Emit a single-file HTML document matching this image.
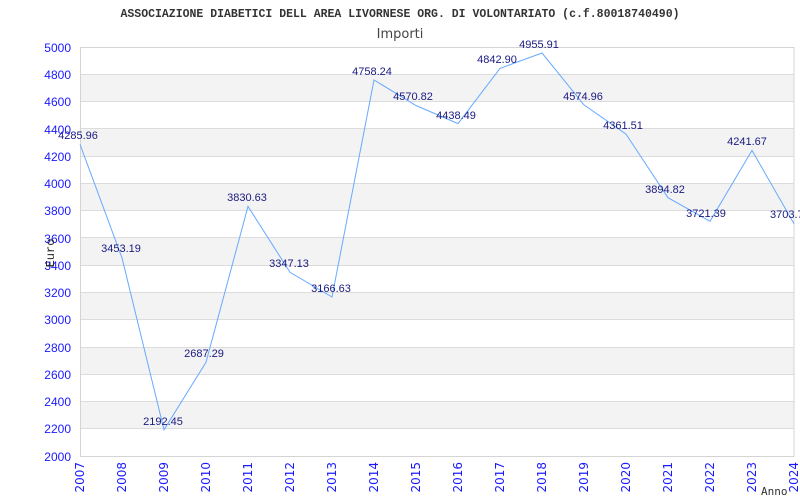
<!DOCTYPE html>
<html><head><meta charset="utf-8"><style>html,body{margin:0;padding:0;background:#fff;width:800px;height:500px;overflow:hidden}</style></head>
<body>
<svg width="800" height="500" xmlns="http://www.w3.org/2000/svg" font-family="Liberation Sans, sans-serif">
<rect width="800" height="500" fill="#fff"/>
<g fill="#f3f3f3">
<rect x="80" y="74.3" width="714" height="27.3"/>
<rect x="80" y="128.8" width="714" height="27.3"/>
<rect x="80" y="183.3" width="714" height="27.3"/>
<rect x="80" y="237.9" width="714" height="27.3"/>
<rect x="80" y="292.4" width="714" height="27.3"/>
<rect x="80" y="347" width="714" height="27.3"/>
<rect x="80" y="401.5" width="714" height="27.3"/>
</g>
<g stroke="#dcdcdc" stroke-width="1">
<line x1="80" y1="74.5" x2="794" y2="74.5"/><line x1="80" y1="101.5" x2="794" y2="101.5"/>
<line x1="80" y1="128.5" x2="794" y2="128.5"/><line x1="80" y1="156.5" x2="794" y2="156.5"/>
<line x1="80" y1="183.5" x2="794" y2="183.5"/><line x1="80" y1="210.5" x2="794" y2="210.5"/>
<line x1="80" y1="237.5" x2="794" y2="237.5"/><line x1="80" y1="265.5" x2="794" y2="265.5"/>
<line x1="80" y1="292.5" x2="794" y2="292.5"/><line x1="80" y1="319.5" x2="794" y2="319.5"/>
<line x1="80" y1="347.5" x2="794" y2="347.5"/><line x1="80" y1="374.5" x2="794" y2="374.5"/>
<line x1="80" y1="401.5" x2="794" y2="401.5"/><line x1="80" y1="428.5" x2="794" y2="428.5"/>
</g>
<rect x="80.5" y="47.5" width="713.5" height="409" fill="none" stroke="#d4d4d4"/>
<polyline fill="none" stroke="#66aaff" stroke-width="1" points="80,144.3 122,257.9 164,429.8 206,362.3 248,206.4 290,272.3 332,297 374,80 416,105.5 458,123.6 500,68.4 542,53 584,104.9 626,134.1 668,197.7 710,221.3 752,150.4 794,223.7"/>
<g font-size="11" fill="#1a1a80" text-anchor="middle">
<text x="78" y="139">4285.96</text><text x="121" y="252">3453.19</text><text x="163" y="425">2192.45</text>
<text x="204" y="357">2687.29</text><text x="247" y="201">3830.63</text><text x="289" y="267">3347.13</text>
<text x="331" y="292">3166.63</text><text x="372" y="75">4758.24</text><text x="413" y="100">4570.82</text>
<text x="456" y="119">4438.49</text><text x="497" y="63">4842.90</text><text x="539" y="48">4955.91</text>
<text x="583" y="100">4574.96</text><text x="623" y="129">4361.51</text><text x="665" y="193">3894.82</text>
<text x="706" y="217">3721.39</text><text x="747" y="145">4241.67</text><text x="770" y="218" text-anchor="start">3703.70</text>
</g>
<g font-size="12" fill="#1a1aff" text-anchor="end">
<text x="71" y="52">5000</text><text x="71" y="79">4800</text><text x="71" y="106">4600</text><text x="71" y="134">4400</text>
<text x="71" y="161">4200</text><text x="71" y="188">4000</text><text x="71" y="215">3800</text><text x="71" y="243">3600</text>
<text x="71" y="270">3400</text><text x="71" y="297">3200</text><text x="71" y="324">3000</text><text x="71" y="352">2800</text>
<text x="71" y="379">2600</text><text x="71" y="406">2400</text><text x="71" y="433">2200</text><text x="71" y="461">2000</text>
</g>
<g font-size="12" fill="#1a1aff" text-anchor="end" font-family="DejaVu Sans, sans-serif">
<text transform="translate(84,462) rotate(-90)">2007</text><text transform="translate(126,462) rotate(-90)">2008</text>
<text transform="translate(168,462) rotate(-90)">2009</text><text transform="translate(210,462) rotate(-90)">2010</text>
<text transform="translate(252,462) rotate(-90)">2011</text><text transform="translate(294,462) rotate(-90)">2012</text>
<text transform="translate(336,462) rotate(-90)">2013</text><text transform="translate(378,462) rotate(-90)">2014</text>
<text transform="translate(420,462) rotate(-90)">2015</text><text transform="translate(462,462) rotate(-90)">2016</text>
<text transform="translate(504,462) rotate(-90)">2017</text><text transform="translate(546,462) rotate(-90)">2018</text>
<text transform="translate(588,462) rotate(-90)">2019</text><text transform="translate(630,462) rotate(-90)">2020</text>
<text transform="translate(672,462) rotate(-90)">2021</text><text transform="translate(714,462) rotate(-90)">2022</text>
<text transform="translate(756,462) rotate(-90)">2023</text><text transform="translate(798,462) rotate(-90)">2024</text>
</g>
<text x="400" y="17" font-family="Liberation Mono, monospace" font-size="11.5" font-weight="bold" fill="#333" text-anchor="middle">ASSOCIAZIONE DIABETICI DELL AREA LIVORNESE ORG. DI VOLONTARIATO (c.f.80018740490)</text>
<text x="400" y="38" font-family="DejaVu Sans, sans-serif" font-size="13" fill="#444" text-anchor="middle">Importi</text>
<text transform="translate(54,253) rotate(-90)" font-family="Liberation Mono, monospace" font-size="12" fill="#222" text-anchor="middle">Euro</text>
<text x="761" y="495" font-family="DejaVu Sans Mono, monospace" font-size="11" fill="#333">Anno</text>
</svg>
</body></html>
